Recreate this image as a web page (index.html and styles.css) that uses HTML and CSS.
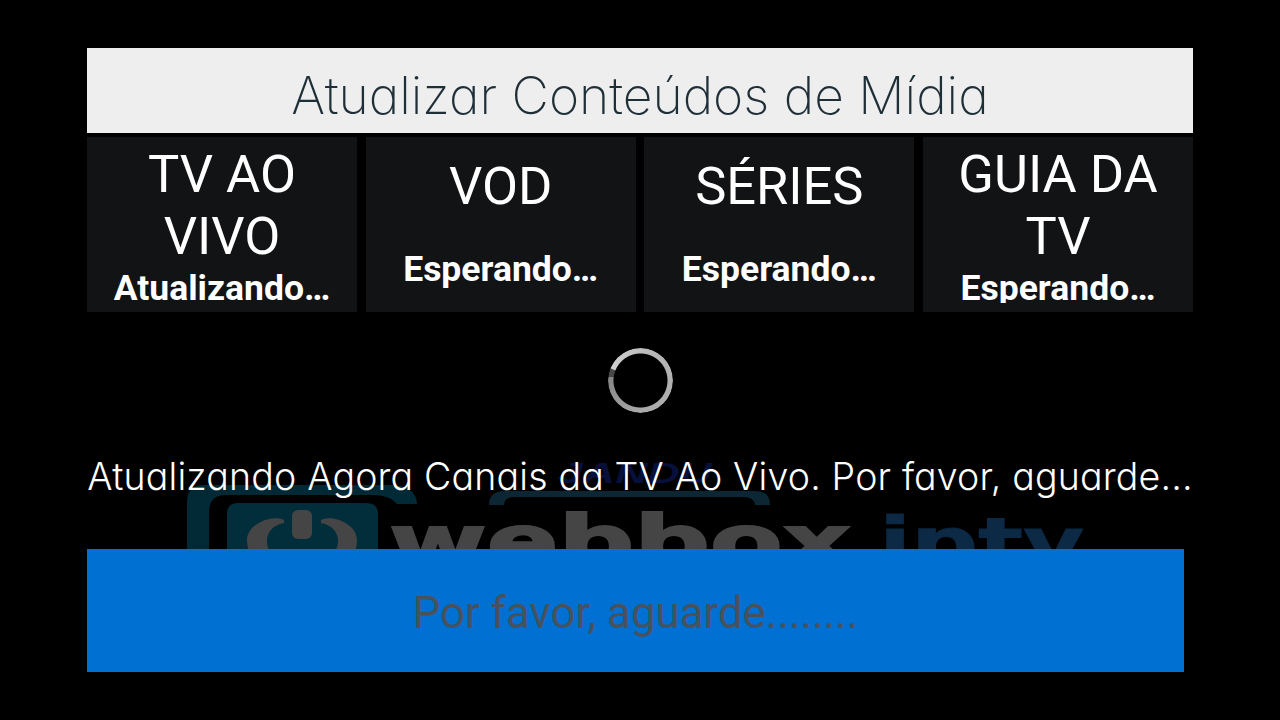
FILE: index.html
```html
<!DOCTYPE html>
<html lang="pt-BR">
<head>
  <meta charset="UTF-8">
  <meta name="viewport" content="width=device-width, initial-scale=1.0">
  <title>Atualizar Conteúdos de Mídia</title>
  <link rel="stylesheet" href="styles.css">
</head>
<body>
  <!-- Dimmed brand logo behind the page -->
  <svg class="backdrop" viewBox="0 0 1280 720" aria-hidden="true">
    <path fill="#022936" d="M187 560V502Q187 485 204 485H390Q416 485 417 504H397Q390 495 372 495H226Q209 495 209 512V560Z"/>
    <path fill="#022e3c" d="M227 560V514Q227 503 238 503H366Q378 503 378 514V560Z"/>
    <rect x="292" y="510" width="20" height="29" rx="6" fill="#454545"/>
    <path fill="#454545" d="M284 520C274 514 247 523 247 540Q247 546 250 555H272C262 542 267 526 284 523ZM321 520C331 514 357 523 357 540Q357 546 354 555H333C343 542 338 526 321 523Z"/>
    <path fill="#0d2634" d="M489 505Q489 491 505 491H755Q770 491 770 505H755Q754 497 744 497H514Q504 497 504 505Z"/>
    <text class="brand-top" x="558" y="483" textLength="154" lengthAdjust="spacingAndGlyphs">JANDU</text>
    <text class="brand-web" x="389" y="566" textLength="462" lengthAdjust="spacingAndGlyphs">webbox</text>
    <text class="brand-iptv" x="879" y="566" textLength="205" lengthAdjust="spacingAndGlyphs">iptv</text>
  </svg>

  <div class="container">
    <h1>Atualizar Conteúdos de Mídia</h1>

    <div class="cards">
      <div class="card">
        <h2>TV AO VIVO</h2>
        <p>Atualizando…</p>
      </div>
      <div class="card short">
        <h2>VOD</h2>
        <p>Esperando…</p>
      </div>
      <div class="card short">
        <h2>SÉRIES</h2>
        <p>Esperando…</p>
      </div>
      <div class="card">
        <h2>GUIA DA TV</h2>
        <p>Esperando…</p>
      </div>
    </div>

    <div class="spinner"></div>
    <p class="message">Atualizando Agora Canais da TV Ao Vivo. Por favor, aguarde...</p>
    <button type="button" disabled>Por favor, aguarde........</button>
  </div>
</body>
</html>
```

FILE: styles.css
```css
* {
  box-sizing: border-box;
}
body {
  margin: 0;
  height: 720px;
  overflow: hidden;
  background-color: #000;
  color: #fff;
  font-family: Roboto, sans-serif;
}
h1, h2, p {
  margin: 0;
  font-weight: 400;
}

.backdrop {
  position: absolute;
  top: 0;
  left: 0;
  width: 1280px;
  height: 720px;
}
.brand-top {
  font: italic bold 29px "Liberation Sans", sans-serif;
  fill: #06103a;
}
.brand-web {
  font: bold 72px "DejaVu Sans", sans-serif;
  fill: #454545;
  stroke: #454545;
  stroke-width: 2px;
}
.brand-iptv {
  font: bold 68px "DejaVu Sans", sans-serif;
  fill: #0c2946;
  stroke: #0c2946;
  stroke-width: 1px;
}

.container {
  position: relative;
  display: flex;
  flex-direction: column;
  padding: 48px 87px;
}

h1 {
  height: 85px;
  line-height: 94px;
  background-color: #eee;
  color: #1f2f38;
  font-family: Inter, sans-serif;
  font-size: 51.5px;
  font-weight: 200;
  font-feature-settings: "cv11";
  text-align: center;
  white-space: nowrap;
}

.cards {
  display: grid;
  grid-template-columns: repeat(4, minmax(0, 1fr));
  gap: 8.7px;
  margin-top: 4px;
}
.card {
  height: 175px;
  padding: 7px 20px 0;
  background-color: #121315;
  text-align: center;
}
.card h2 {
  padding: 0 6px;
  font-size: 52.4px;
  line-height: 61.5px;
}
.card p {
  height: 36px;
  overflow: hidden;
  font-size: 35.5px;
  line-height: 43px;
  font-weight: 700;
  white-space: nowrap;
}
.card.short {
  padding-top: 19px;
}
.card.short p {
  height: 45px;
  margin-top: 30px;
}

.spinner {
  width: 65px;
  height: 65px;
  margin: 35.5px auto 0;
  border-radius: 50%;
  background: conic-gradient(from 277deg, #484848 0deg 14deg, #cfcfcf 16deg, #b5b5b5 120deg, #aaa 260deg, #858585 360deg);
  -webkit-mask: radial-gradient(circle, transparent 26.5px, #000 27.5px);
  mask: radial-gradient(circle, transparent 26.5px, #000 27.5px);
}

.message {
  height: 50px;
  margin: 39.5px -10px 0;
  line-height: 50px;
  font-family: Inter, sans-serif;
  font-size: 37.5px;
  font-weight: 300;
  font-feature-settings: "cv11";
  letter-spacing: 0.17px;
  text-align: center;
  white-space: nowrap;
}

button {
  width: 1097px;
  height: 123px;
  margin-top: 47px;
  padding: 5px 0 0;
  border: none;
  background-color: #0070d2;
  color: #46525e;
  font-family: Roboto, sans-serif;
  font-size: 43.8px;
}
```
